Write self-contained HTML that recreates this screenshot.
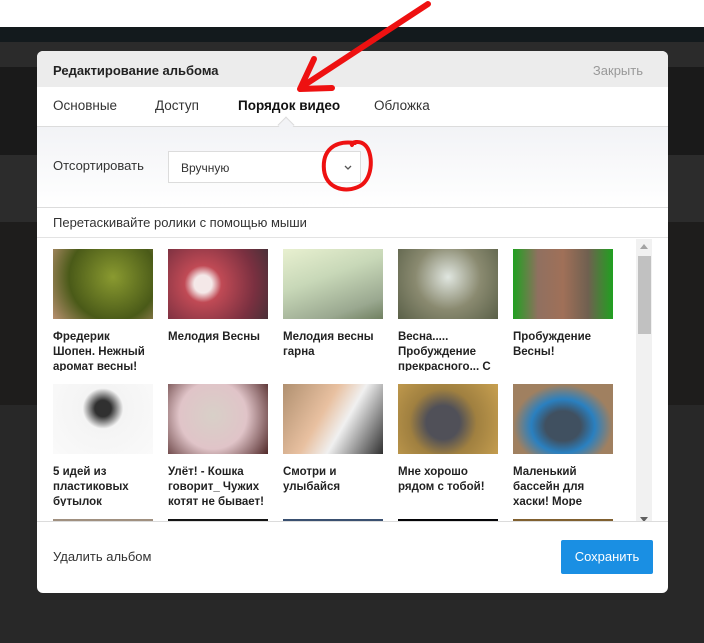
<!DOCTYPE html>
<html><head><meta charset="utf-8"><style>
*{margin:0;padding:0;box-sizing:border-box}
body{width:704px;height:643px;overflow:hidden;position:relative;font-family:"Liberation Sans",sans-serif;background:#262626}
.bg{position:absolute;left:0;width:704px}
.m{position:absolute;left:37px;top:51px;width:631px;height:542px;background:#fff;border-radius:6px;overflow:hidden}
.hd{height:36px;background:#ececec;font-size:13px;padding:12px 16px;color:#222;font-weight:bold}
.hd span{position:absolute;right:25px;top:12px;color:#999;font-weight:normal}
.tabs{height:40px;border-bottom:1px solid #dcdcdc;position:relative;font-size:13.5px;color:#333}
.tabs div{position:absolute;top:11px}
.sort{height:81px;background:linear-gradient(#f2f3f6,#fff);border-bottom:1px solid #dcdcdc;position:relative}
.cap{height:30px;border-bottom:1px solid #e3e3e3;font-size:13px;color:#333;padding:7px 16px}
.grid{position:absolute;left:0;top:188px;width:600px;height:282px;overflow:hidden}
.it{position:absolute;width:100px}
.it .t{height:70px}
.it .n{margin-top:11px;font-size:11.5px;font-weight:bold;line-height:15px;color:#222;height:41px;overflow:hidden}
.ft{position:absolute;top:470px;left:0;width:631px;height:72px;border-top:1px solid #dcdcdc}
</style></head><body>
<div class="bg" style="top:0;height:27px;background:#fff"></div>
<div class="bg" style="top:27px;height:15px;background:#131a1d"></div>
<div class="bg" style="top:42px;height:25px;background:#2b2b2b"></div>
<div class="bg" style="top:67px;height:88px;background:#1a1a1a"></div>
<div class="bg" style="top:155px;height:67px;background:#2c2c2c"></div>
<div class="bg" style="top:222px;height:183px;background:#1e1d1c"></div>
<div class="bg" style="top:405px;height:238px;background:#282828"></div>
<div class="m">
<div class="hd">Редактирование альбома<span>Закрыть</span></div>
<div class="tabs">
<div style="left:16px">Основные</div><div style="left:118px">Доступ</div><div style="left:201px;font-weight:bold;color:#111">Порядок видео</div><div style="left:337px">Обложка</div>
<div style="left:243px;top:32px;width:12px;height:12px;background:#f2f3f6;border-left:1px solid #dcdcdc;border-top:1px solid #dcdcdc;transform:rotate(45deg)"></div>
</div>
<div class="sort">
<div style="position:absolute;left:16px;top:31px;font-size:13px;color:#333">Отсортировать</div>
<div style="position:absolute;left:131px;top:24px;width:193px;height:32px;border:1px solid #dcdcdc;background:#fff;font-size:12px;color:#333;padding:9px 12px">Вручную</div>
<svg style="position:absolute;left:307px;top:38px" width="8" height="6"><path d="M1 1L4 4L7 1" stroke="#555" stroke-width="1.3" fill="none"/></svg>
</div>
<div class="cap">Перетаскивайте ролики с помощью мыши</div>
<div class="grid">
<div class="it" style="left:16px;top:10px"><div class="t" style="background:radial-gradient(circle at 60% 40%,#8a9a30,#4a5a18 60%,#b89070)"></div><div class="n">Фредерик Шопен. Нежный аромат весны!</div></div>
<div class="it" style="left:131px;top:10px"><div class="t" style="background:radial-gradient(circle at 35% 50%,#f4e8e8 12%,#c04a55 25%,#7a3040 70%,#4a3038)"></div><div class="n">Мелодия Весны</div></div>
<div class="it" style="left:246px;top:10px"><div class="t" style="background:linear-gradient(160deg,#e8f0d0,#c8d8b8 40%,#9aa890 80%,#708060)"></div><div class="n">Мелодия весны гарна</div></div>
<div class="it" style="left:361px;top:10px"><div class="t" style="background:radial-gradient(circle at 50% 40%,#e0e6e0,#8a8a70 50%,#5a6048)"></div><div class="n">Весна..... Пробуждение прекрасного... С</div></div>
<div class="it" style="left:476px;top:10px"><div class="t" style="background:linear-gradient(90deg,#20a020,#907060 25%,#a07058 50%,#706050 75%,#20a020)"></div><div class="n">Пробуждение Весны!</div></div>
<div class="it" style="left:16px;top:145px"><div class="t" style="background:radial-gradient(circle at 50% 35%,#303030 12%,#f4f4f4 30%,#fafafa)"></div><div class="n">5 идей из пластиковых бутылок</div></div>
<div class="it" style="left:131px;top:145px"><div class="t" style="background:radial-gradient(circle at 45% 45%,#d8d0c8,#e0c4c8 50%,#502828)"></div><div class="n">Улёт! - Кошка говорит_ Чужих котят не бывает!</div></div>
<div class="it" style="left:246px;top:145px"><div class="t" style="background:linear-gradient(120deg,#b09070,#e8c0a0 40%,#f0f0f0 60%,#303030)"></div><div class="n">Смотри и улыбайся</div></div>
<div class="it" style="left:361px;top:145px"><div class="t" style="background:radial-gradient(circle at 45% 55%,#505058 25%,#a08040 50%,#c8a050)"></div><div class="n">Мне хорошо рядом с тобой!</div></div>
<div class="it" style="left:476px;top:145px"><div class="t" style="background:radial-gradient(ellipse at 50% 60%,#405060 25%,#2a80c0 45%,#a08060 70%)"></div><div class="n">Маленький бассейн для хаски! Море</div></div>
<div class="it" style="left:16px;top:280px"><div class="t" style="background:#a09080"></div></div>
<div class="it" style="left:131px;top:280px"><div class="t" style="background:#141414"></div></div>
<div class="it" style="left:246px;top:280px"><div class="t" style="background:#3a5070"></div></div>
<div class="it" style="left:361px;top:280px"><div class="t" style="background:#050508"></div></div>
<div class="it" style="left:476px;top:280px"><div class="t" style="background:#806030"></div></div>
</div>
<div style="position:absolute;left:599px;top:188px;width:16px;height:282px;background:#f1f1f1"></div>
<div style="position:absolute;left:601px;top:205px;width:13px;height:78px;background:#c1c1c1"></div>
<div style="position:absolute;left:603px;top:193px;width:0;height:0;border:4px solid transparent;border-bottom:5px solid #a3a3a3;border-top:none"></div>
<div style="position:absolute;left:603px;top:466px;width:0;height:0;border:4px solid transparent;border-top:5px solid #606060;border-bottom:none"></div>
<div class="ft">
<div style="position:absolute;left:16px;top:27px;font-size:13px;color:#333">Удалить альбом</div>
<div style="position:absolute;left:524px;top:18px;width:92px;height:34px;background:#1a8fe3;border-radius:2px;color:#fff;font-size:13px;text-align:center;line-height:34px">Сохранить</div>
</div>
</div>
<svg style="position:absolute;left:0;top:0" width="704" height="643">
<path d="M428 4L303 86" stroke="#ee1111" stroke-width="6" stroke-linecap="round" fill="none"/>
<path d="M314 59L300 89L332 88" stroke="#ee1111" stroke-width="6" stroke-linecap="round" stroke-linejoin="round" fill="none"/>
<path d="M355 143C335 140 322 150 324 170C326 188 345 194 360 186C374 178 373 152 365 145C360 140 350 142 352 145" stroke="#ee1111" stroke-width="4" fill="none" stroke-linecap="round"/>
</svg>
</body></html>
